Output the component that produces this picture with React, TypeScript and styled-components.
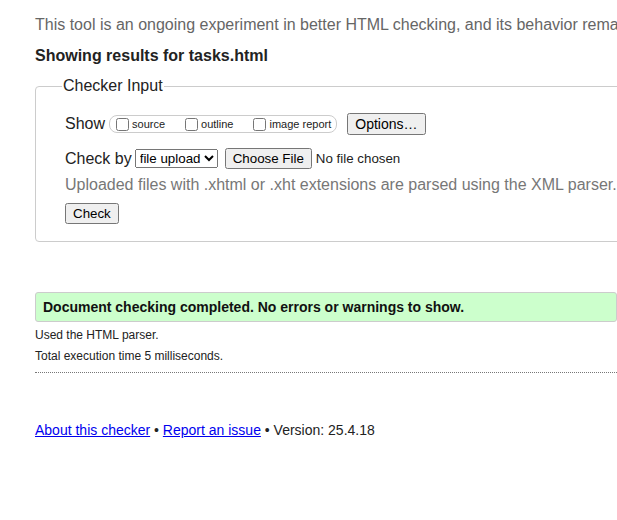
import React from "react";
import styled, { createGlobalStyle } from "styled-components";

const Global = createGlobalStyle`
  html, body { margin: 0; padding: 0; background: #fff; overflow: hidden; }
  body { font-family: "Liberation Sans", Arial, sans-serif; color: #222; }
`;

const Page = styled.div`
  width: 582px;
  padding-left: 35px;
`;

const Intro = styled.p`
  margin: 16px 0 0;
  font-size: 16px;
  line-height: 18px;
  color: #666;
  white-space: nowrap;
`;

const Heading = styled.h2`
  margin: 13px 0 0;
  font-size: 16px;
  line-height: 18px;
  font-weight: bold;
  color: #222;
`;

const Fieldset = styled.fieldset`
  margin: 12px -40px 0 0;
  padding: 18px 0 17px 29px;
  border: 1px solid #ccc;
  border-radius: 4px;
  min-width: 0;
`;

const Legend = styled.legend`
  margin-left: -3px;
  padding: 0 1px;
  font-size: 16px;
  line-height: 18px;
  color: #222;
`;

const Row = styled.div<{ $gap: number; $top: number; $h: number }>`
  display: flex;
  align-items: center;
  gap: ${(p) => p.$gap}px;
  margin-top: ${(p) => p.$top}px;
  height: ${(p) => p.$h}px;
`;

const RowLabel = styled.span`
  font-size: 16px;
  line-height: 18px;
`;

const OptionGroup = styled.div`
  display: flex;
  align-items: center;
  gap: 16px;
  height: 16px;
  padding: 0 5px 0 2px;
  border: 1px solid #ccc;
  border-radius: 8px;
`;

const OptionLabel = styled.label`
  display: flex;
  align-items: center;
  font-size: 11px;
  line-height: 13px;
  color: #222;
  input {
    margin: 0 3px 0 4px;
  }
`;

const Button = styled.button<{ $size: number }>`
  font-family: "Liberation Sans", Arial, sans-serif;
  font-size: ${(p) => p.$size}px;
`;

const Select = styled.select`
  font-family: "Liberation Sans", Arial, sans-serif;
  font-size: 13.33px;
`;

const FileInput = styled.input`
  font-family: "Liberation Sans", Arial, sans-serif;
  font-size: 13.33px;
`;

const Hint = styled.p`
  margin: 7px 0 0;
  font-size: 16px;
  line-height: 18px;
  color: #777;
`;

const Success = styled.div`
  margin-top: 50px;
  padding: 5px 7px;
  border: 1px solid #ccc;
  border-radius: 3px;
  background: #ccffcc;
  font-size: 14px;
  line-height: 18px;
  font-weight: bold;
  color: #111;
`;

const Detail = styled.p<{ $top: number }>`
  margin: ${(p) => p.$top}px 0 0;
  font-size: 12px;
  line-height: 14px;
  color: #222;
`;

const Rule = styled.hr`
  margin: 9px 0 0;
  border: 0;
  border-top: 1px dotted #777;
  height: 0;
`;

const Footer = styled.p`
  margin: 49px 0 0;
  font-size: 14px;
  line-height: 16px;
  color: #222;
  a { color: #00e; text-decoration: underline; }
`;

export default function App() {
  return (
    <>
      <Global />
      <Page>
        <Intro>
          This tool is an ongoing experiment in better HTML checking, and its behavior remains subject to change
        </Intro>
        <Heading>Showing results for tasks.html</Heading>
        <Fieldset>
          <Legend>Checker Input</Legend>
          <Row $gap={4} $top={0} $h={22}>
            <RowLabel>Show</RowLabel>
            <OptionGroup>
              <OptionLabel>
                <input type="checkbox" />
                source
              </OptionLabel>
              <OptionLabel>
                <input type="checkbox" />
                outline
              </OptionLabel>
              <OptionLabel>
                <input type="checkbox" />
                image report
              </OptionLabel>
            </OptionGroup>
            <Button $size={14} style={{ marginLeft: 6 }}>Options…</Button>
          </Row>
          <Row $gap={3} $top={13} $h={21}>
            <RowLabel>Check by</RowLabel>
            <Select defaultValue="file">
              <option value="address">address</option>
              <option value="file">file upload</option>
              <option value="text">text input</option>
            </Select>
            <FileInput type="file" style={{ marginLeft: 4 }} />
          </Row>
          <Hint>Uploaded files with .xhtml or .xht extensions are parsed using the XML parser.</Hint>
          <Row $gap={0} $top={9} $h={21}>
            <Button $size={13.33}>Check</Button>
          </Row>
        </Fieldset>
        <Success>Document checking completed. No errors or warnings to show.</Success>
        <Detail $top={6}>Used the HTML parser.</Detail>
        <Detail $top={7}>Total execution time 5 milliseconds.</Detail>
        <Rule />
        <Footer>
          <a href="#about">About this checker</a> • <a href="#issue">Report an issue</a> • Version: 25.4.18
        </Footer>
      </Page>
    </>
  );
}
